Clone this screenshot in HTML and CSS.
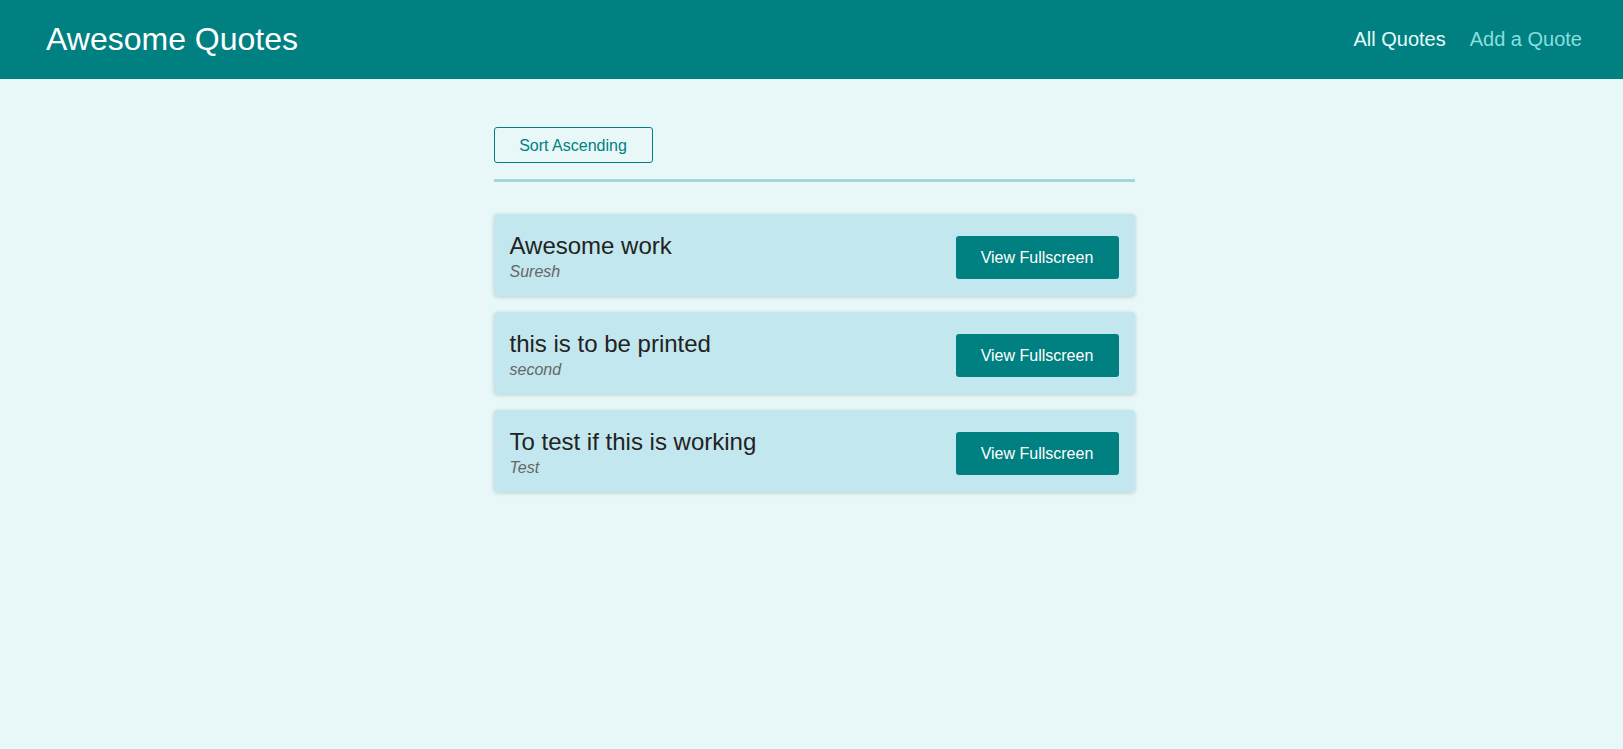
FILE: index.html
```html
<!DOCTYPE html>
<html lang="en">
<head>
<meta charset="utf-8">
<title>Awesome Quotes</title>
<link rel="stylesheet" href="styles.css">
</head>
<body>
<header class="header">
  <div class="logo">Awesome Quotes</div>
  <nav class="nav">
    <ul class="nav-list">
      <li><a class="nav-link active" href="#">All Quotes</a></li>
      <li><a class="nav-link" href="#">Add a Quote</a></li>
    </ul>
  </nav>
</header>
<main class="main">
  <div class="sorting">
    <button class="sort-btn">Sort Ascending</button>
  </div>
  <ul class="quote-list">
    <li class="quote-item">
      <figure class="quote">
        <blockquote class="quote-text">Awesome work</blockquote>
        <figcaption class="quote-author">Suresh</figcaption>
      </figure>
      <a class="btn" href="#">View Fullscreen</a>
    </li>
    <li class="quote-item">
      <figure class="quote">
        <blockquote class="quote-text">this is to be printed</blockquote>
        <figcaption class="quote-author">second</figcaption>
      </figure>
      <a class="btn" href="#">View Fullscreen</a>
    </li>
    <li class="quote-item">
      <figure class="quote">
        <blockquote class="quote-text">To test if this is working</blockquote>
        <figcaption class="quote-author">Test</figcaption>
      </figure>
      <a class="btn" href="#">View Fullscreen</a>
    </li>
  </ul>
</main>
</body>
</html>
```

FILE: styles.css
```css
* { box-sizing: border-box; }

html, body {
  margin: 0;
  padding: 0;
}

body {
  font-family: "Liberation Sans", Arial, sans-serif;
  background: #e8f8f8;
  min-height: 749px;
}

.header {
  height: 79px;
  background: #008080;
  display: flex;
  align-items: center;
  justify-content: space-between;
  padding: 0 41px 0 46px;
}

.logo {
  color: #ffffff;
  font-size: 32px;
  line-height: 1;
  margin-top: -2px;
}

.nav-list {
  list-style: none;
  margin: 0;
  padding: 0;
  display: flex;
  gap: 24px;
}

.nav-link {
  text-decoration: none;
  font-size: 20px;
  color: #88dfdf;
}

.nav-link.active {
  color: #e6fcfc;
}

.main {
  width: 641px;
  margin: 48px 0 0 calc(50% - 318px);
}

.sorting {
  padding-bottom: 16px;
  border-bottom: 3px solid #a8d5d5;
}

.sort-btn {
  font-family: inherit;
  font-size: 16px;
  color: #008080;
  background: transparent;
  border: 1px solid #008080;
  border-radius: 3px;
  padding: 8px 24px;
  line-height: 17px;
  width: 159px;
  height: 36px;
  cursor: pointer;
}

.quote-list {
  list-style: none;
  margin: 32px 0 0;
  padding: 0;
  display: flex;
  flex-direction: column;
  gap: 16px;
}

.quote-item {
  display: flex;
  align-items: flex-start;
  justify-content: space-between;
  background: #c2e7ef;
  border-radius: 4px;
  padding: 0 16px;
  height: 82px;
  box-shadow: 0 1px 4px rgba(0, 0, 0, 0.18);
}

.quote {
  margin: 18px 0 0;
  padding: 0;
}

.quote-text {
  margin: 0;
  font-size: 24px;
  line-height: 28px;
  color: #222222;
}

.quote-author {
  font-style: italic;
  font-size: 16px;
  line-height: 19px;
  color: #666666;
  margin-top: 2px;
}

.btn {
  display: inline-block;
  margin-top: 22px;
  text-decoration: none;
  background: #008080;
  color: #ffffff;
  font-size: 16px;
  line-height: 19px;
  border-radius: 3px;
  width: 163px;
  height: 43px;
  padding: 12px 0;
  text-align: center;
}
```
